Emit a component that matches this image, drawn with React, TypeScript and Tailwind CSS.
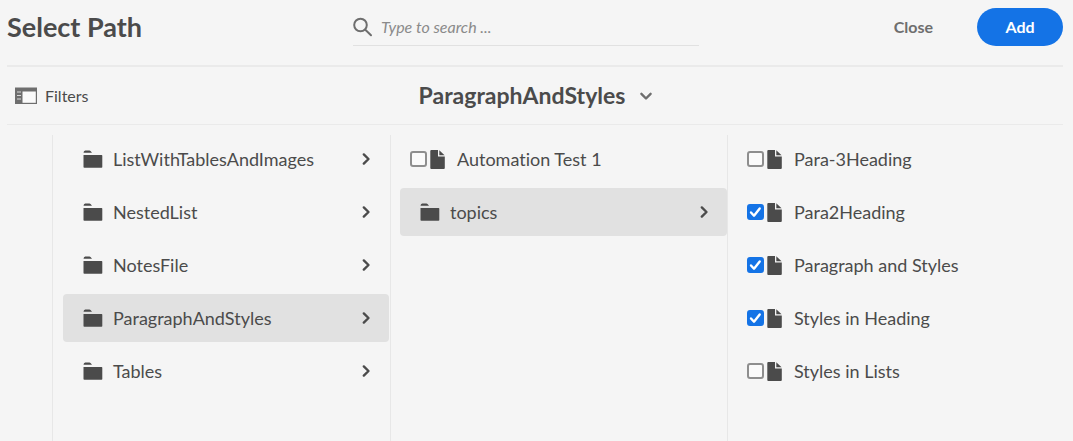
import React from 'react';

type Item = { name: string; kind: 'folder' | 'file'; selected?: boolean; checked?: boolean };

const ancestors: Item[] = [
  { name: 'ListWithTablesAndImages', kind: 'folder' },
  { name: 'NestedList', kind: 'folder' },
  { name: 'NotesFile', kind: 'folder' },
  { name: 'ParagraphAndStyles', kind: 'folder', selected: true },
  { name: 'Tables', kind: 'folder' },
];
const children: Item[] = [
  { name: 'Automation Test 1', kind: 'file' },
  { name: 'topics', kind: 'folder', selected: true },
];
const topics: Item[] = [
  { name: 'Para-3Heading', kind: 'file' },
  { name: 'Para2Heading', kind: 'file', checked: true },
  { name: 'Paragraph and Styles', kind: 'file', checked: true },
  { name: 'Styles in Heading', kind: 'file', checked: true },
  { name: 'Styles in Lists', kind: 'file' },
];

function FolderIcon() {
  return (
    <svg width="20" height="18" viewBox="0 0 20 18" fill="#4b4b4b" className="shrink-0" aria-hidden="true">
      <path d="M.5 2.800Q.6 .8 2.200 .5H6.500Q7.300 .6 9 2.800Z" />
      <path d="M.5 5H18.600Q19.300 5 19.300 5.700V17Q19.300 17.800 18.500 17.800H1.300Q.5 17.800 .5 17Z" />
    </svg>
  );
}

function FileIcon() {
  return (
    <svg width="15" height="19" viewBox="0 0 15 19" fill="#4b4b4b" className="shrink-0" aria-hidden="true">
      <path d="M8 0V6.500H14.800V18Q14.800 19 13.800 19H1.300Q.3 19 .3 18V1Q.3 0 1.300 0Z" />
      <path d="M9.300 .2L14.600 5.300H9.300Z" />
    </svg>
  );
}

function Chevron({ className }: { className?: string }) {
  return (
    <svg width="10" height="14" viewBox="0 0 10 14" fill="none" strokeWidth="2.400" strokeLinecap="round" strokeLinejoin="round" className={className} aria-hidden="true">
      <path d="M2.800 2.400L7.500 7L2.800 11.600" />
    </svg>
  );
}

function Row({ item }: { item: Item }) {
  if (item.kind === 'folder') {
    return (
      <button className={`flex h-12 w-full items-center rounded pr-[18px] pl-5 text-left ${item.selected ? 'bg-[#e1e1e1]' : ''}`}>
        <FolderIcon />
        <span className="ml-[10px] flex-1">{item.name}</span>
        <Chevron className="stroke-[#4b4b4b]" />
      </button>
    );
  }
  return (
    <label className="flex h-12 w-full items-center pl-[10px]">
      <span className="relative h-4 w-[17px] shrink-0">
        <input type="checkbox" defaultChecked={item.checked} className="peer block h-4 w-[17px] appearance-none rounded-[3px] border-2 border-[#8e8e8e] bg-[#fafafa] checked:border-[#1473e6] checked:bg-[#1473e6]" />
        <svg viewBox="0 0 17 16" fill="none" stroke="white" strokeWidth="2.400" strokeLinecap="round" strokeLinejoin="round" className="pointer-events-none absolute inset-0 hidden peer-checked:block" aria-hidden="true">
          <path d="M4 8.500L7 11.700L12.700 4.500" />
        </svg>
      </span>
      <span className="ml-[3px] flex"><FileIcon /></span>
      <span className="ml-3">{item.name}</span>
    </label>
  );
}

function Column({ items, className }: { items: Item[]; className: string }) {
  return (
    <ul className={`flex flex-col gap-[5px] border-l border-[#e7e7e7] ${className}`}>
      {items.map((item) => <li key={item.name}><Row item={item} /></li>)}
    </ul>
  );
}

export default function App() {
  return (
    <main className="flex min-h-screen flex-col bg-[#f5f5f5] font-['Lato','Noto_Sans',sans-serif] text-[#4b4b4b] [font-variant-ligatures:none]">
      <header className="mr-[10px] ml-[7px] flex h-[67px] items-start border-b-2 border-[#eaeaea]">
        <h1 className="mt-[7px] w-[346px] text-[27px] leading-10 font-bold">Select Path</h1>
        <label className="mt-2 flex h-[38px] w-[346px] items-center border-b border-[#e1e1e1]">
          <svg width="20" height="20" viewBox="0 0 20 20" fill="none" stroke="#6e6e6e" strokeWidth="2" strokeLinecap="round" aria-hidden="true"><circle cx="7.500" cy="8" r="6.300" /><path d="M12.300 12.800L18 18.300" /></svg>
          <input type="search" aria-label="Search" placeholder="Type to search ..." className="ml-2 min-w-0 flex-1 bg-transparent text-base outline-none placeholder:text-[#8a8a8a] placeholder:italic" />
        </label>
        <div className="mt-2 ml-auto flex items-center gap-11 text-base font-bold">
          <button className="text-[#6e6e6e]">Close</button>
          <button className="h-[38px] w-[86px] rounded-full bg-[#1473e6] text-white">Add</button>
        </div>
      </header>
      <nav className="mr-[10px] ml-[7px] grid h-[58px] grid-cols-[1fr_auto_1fr] items-center border-b border-[#eaeaea]">
        <button className="ml-2 flex items-center gap-2 text-base">
          <svg width="22" height="17" viewBox="0 0 22 17" aria-hidden="true">
            <path fill="#6e6e6e" d="M0 .5H22V17H0Z" />
            <path fill="#fafafa" d="M7.500 4.500H20.800V15.800H7.500Z" />
            <path stroke="#d8d8d8" d="M2 5H6M2 8.500H6M2 12H6" />
          </svg>
          Filters
        </button>
        <button className="flex items-center gap-4 text-[23px] font-bold">ParagraphAndStyles <Chevron className="rotate-90 stroke-[#6e6e6e]" /></button>
      </nav>
      <section className="mt-[10px] grid flex-1 grid-cols-[52px_338px_337px_1fr] text-lg">
        <div />
        <Column items={ancestors} className="pr-px pl-[10px]" />
        <Column items={children} className="pl-[9px]" />
        <Column items={topics} className="pl-[9px]" />
      </section>
    </main>
  );
}
